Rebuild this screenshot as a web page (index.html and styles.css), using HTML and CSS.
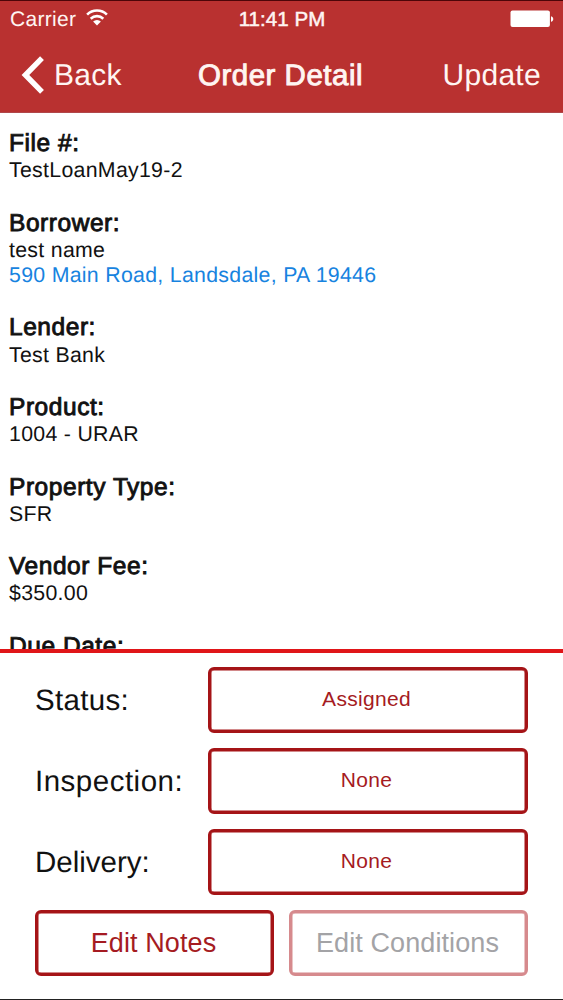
FILE: index.html
```html
<!DOCTYPE html>
<html lang="en">
<head>
<meta charset="utf-8">
<title>Order Detail</title>
<link rel="stylesheet" href="styles.css">
</head>
<body>
<div class="screen">
  <header class="header">
    <div class="status-bar">
      <div class="carrier"><span class="carrier-name">Carrier</span>
        <svg class="wifi" width="22" height="17" viewBox="0 0 22 17" fill="none" stroke="#fff" stroke-width="2.6">
          <path d="M1.1 5.6a14 14 0 0 1 19.8 0"/>
          <path d="M4.7 9.7a9 9 0 0 1 12.6 0"/>
          <path d="M11 16.4 7.1 12.5a5.5 5.5 0 0 1 7.800 0z" fill="#fff" stroke="none"/>
        </svg>
      </div>
      <div class="clock">11:41 PM</div>
      <svg class="battery" width="44" height="18" viewBox="0 0 44 18" fill="#fff">
        <rect x="0.5" y="0.5" width="39.4" height="16.6" rx="2"/>
        <path d="M41 6.2c3 .8 3 4.8 0 5.6z"/>
      </svg>
    </div>
    <nav class="nav">
      <a class="back"><svg class="chevron" width="24" height="38" viewBox="0 0 24 38" fill="none" stroke="#fff" stroke-width="5.4"><path d="M22 2.2 5.4 19 22 35.8"/></svg><span class="nav-text">Back</span></a>
      <h1 class="title">Order Detail</h1>
      <a class="update nav-text">Update</a>
    </nav>
  </header>
  <main class="details">
    <section class="entry"><h2 class="name">File #:</h2><p class="value">TestLoanMay19-2</p></section>
    <section class="entry"><h2 class="name">Borrower:</h2><p class="value">test name</p><p class="value link">590 Main Road, Landsdale, PA 19446</p></section>
    <section class="entry"><h2 class="name">Lender:</h2><p class="value">Test Bank</p></section>
    <section class="entry"><h2 class="name">Product:</h2><p class="value">1004 - URAR</p></section>
    <section class="entry"><h2 class="name">Property Type:</h2><p class="value">SFR</p></section>
    <section class="entry"><h2 class="name">Vendor Fee:</h2><p class="value">$350.00</p></section>
    <section class="entry"><h2 class="name">Due Date:</h2></section>
  </main>
  <footer class="panel">
    <div class="row"><span class="label">Status:</span><button class="btn">Assigned</button></div>
    <div class="row"><span class="label label-wide">Inspection:</span><button class="btn">None</button></div>
    <div class="row"><span class="label label-tight">Delivery:</span><button class="btn">None</button></div>
    <div class="actions"><button class="btn large">Edit Notes</button><button class="btn large disabled" disabled>Edit Conditions</button></div>
  </footer>
</div>
</body>
</html>
```

FILE: styles.css
```css
* { box-sizing: border-box; }
body { margin: 0; background: #fff; font-family: "Liberation Sans", Arial, sans-serif; color: #111; text-rendering: geometricPrecision; }
.screen { height: 1000px; display: flex; flex-direction: column; overflow: hidden; border-bottom: 1px solid #222; }
.header { flex: none; height: 113px; background: #b93130; color: #fff5f2; border-top: 1px solid #4c0508; border-bottom: 1px solid #b0474a; }
.status-bar { display: grid; grid-template-columns: 1fr auto 1fr; align-items: center; height: 37px; padding: 0 9px 0 10px; }
.carrier { display: flex; align-items: center; gap: 10px; font-size: 21px; letter-spacing: 0.3px; }
.carrier-name { padding-top: 1px; }
.wifi { display: block; margin-top: -4px; }
.clock { font-size: 20.5px; letter-spacing: 0.05px; padding-top: 1px; -webkit-text-stroke: 0.5px currentColor; }
.battery { justify-self: end; margin-top: -1px; }
.nav { display: grid; grid-template-columns: 1fr auto 1fr; align-items: center; height: 74px; padding: 0 22px 0 20px; }
.back { display: flex; align-items: center; gap: 10px; }
.nav-text { font-size: 30px; letter-spacing: 0.3px; padding-top: 2px; }
.title { margin: 0; padding-top: 2px; font-size: 29.5px; letter-spacing: 0.5px; font-weight: 400; -webkit-text-stroke: 0.9px currentColor; }
.update { justify-self: end; }
.details { flex: none; height: 536px; overflow: hidden; padding: 16px 9px 0; }
.entry { padding-bottom: 25.2px; }
.name { margin: 0; font-size: 24.5px; letter-spacing: 0.55px; line-height: 29.2px; font-weight: 400; -webkit-text-stroke: 0.9px currentColor; }
.value { margin: 0; font-size: 21.3px; line-height: 25.2px; letter-spacing: 0.3px; white-space: nowrap; }
.link { color: #1783df; }
.panel { flex: 1; border-top: 4px solid #e01518; padding: 14px 35px 0; display: flex; flex-direction: column; gap: 15px; }
.row { display: grid; grid-template-columns: 173px 1fr; align-items: center; height: 66px; }
.label { font-size: 29.5px; letter-spacing: 0.3px; white-space: nowrap; padding-top: 2px; }
.label-wide { letter-spacing: 0.5px; }
.label-tight { letter-spacing: 0; }
.btn { height: 66px; margin: 0; padding: 0 3px 2px 0; border: 3px solid #a51417; box-shadow: inset 0 0 0 0.5px #a51417; border-radius: 6px; background: #fff; color: #a51b22; font-family: inherit; font-size: 21px; letter-spacing: 0.3px; }
.actions { display: grid; grid-template-columns: 1fr 1fr; gap: 15px; }
.btn.large { font-size: 27px; letter-spacing: 0.1px; padding: 1px 2px 0 0; }
.btn.disabled { border-color: #d68a8d; box-shadow: inset 0 0 0 0.5px #d68a8d; color: #a3a3a6; }
```
